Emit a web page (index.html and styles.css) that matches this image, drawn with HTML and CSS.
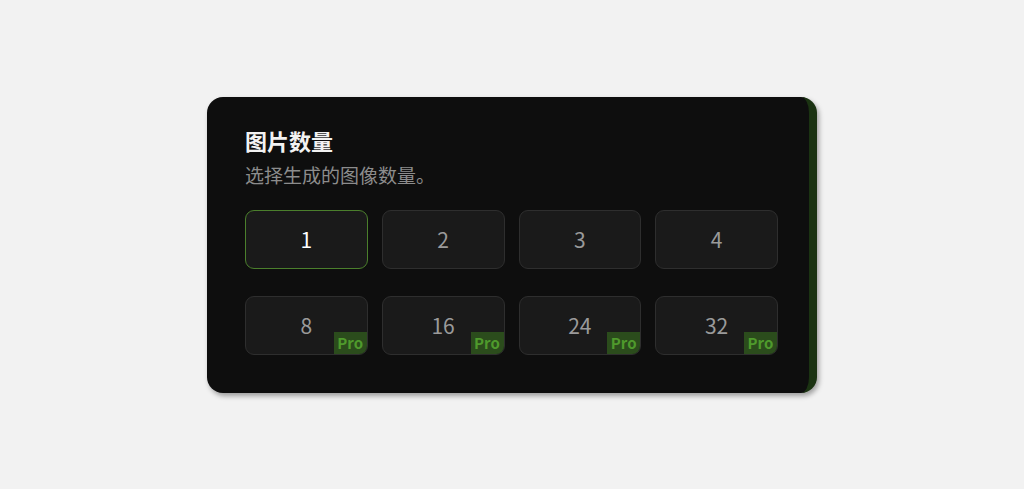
FILE: index.html
```html
<!DOCTYPE html>
<html lang="zh-CN">
<head>
    <meta charset="UTF-8">
    <meta name="viewport" content="width=device-width, initial-scale=1.0">
    <title>图片数量</title>
    <link rel="stylesheet" href="styles.css">
</head>
<body>
    <div class="card">
        <h2 class="title">图片数量</h2>
        <p class="subtitle">选择生成的图像数量。</p>

        <div class="options">
            <button class="option selected">1</button>
            <button class="option">2</button>
            <button class="option">3</button>
            <button class="option">4</button>
            <button class="option">8<span class="pro">Pro</span></button>
            <button class="option">16<span class="pro">Pro</span></button>
            <button class="option">24<span class="pro">Pro</span></button>
            <button class="option">32<span class="pro">Pro</span></button>
        </div>
    </div>
</body>
</html>
```

FILE: styles.css
```css
body {
    margin: 0;
    height: 100vh;
    display: flex;
    align-items: center;
    justify-content: center;
    background: #f2f2f2;
    font-family: "Noto Sans CJK SC", "Noto Sans", sans-serif;
}

.card {
    box-sizing: border-box;
    width: 610px;
    height: 296px;
    padding: 28px 31px 38px 38px;
    background: #0e0e0e;
    border-right: 8px solid #1b3312;
    border-radius: 16px;
    box-shadow: 2px 3px 5px rgba(0, 0, 0, 0.35);
}

.title {
    margin: 0;
    font-size: 22px;
    font-weight: 700;
    line-height: 30px;
    color: #f2f2f2;
}

.subtitle {
    margin: 7px 0 0;
    font-size: 19px;
    line-height: 26px;
    color: #8c8c8c;
}

.options {
    margin-top: 22px;
    display: grid;
    grid-template-columns: repeat(4, 1fr);
    column-gap: 14px;
    row-gap: 27px;
}

.option {
    position: relative;
    height: 59px;
    padding: 0;
    overflow: hidden;
    background: #1a1a1a;
    border: 1px solid #2e2e2e;
    border-radius: 9px;
    font-family: inherit;
    font-size: 21px;
    color: #9a9a9a;
    cursor: pointer;
}

.option.selected {
    border-color: #4b7f2c;
    color: #ffffff;
}

.pro {
    position: absolute;
    right: 0;
    bottom: 0;
    width: 33px;
    height: 22px;
    line-height: 22px;
    text-align: center;
    background: #2b4c1c;
    color: #4f9a2c;
    font-size: 15px;
    font-weight: 700;
}
```
